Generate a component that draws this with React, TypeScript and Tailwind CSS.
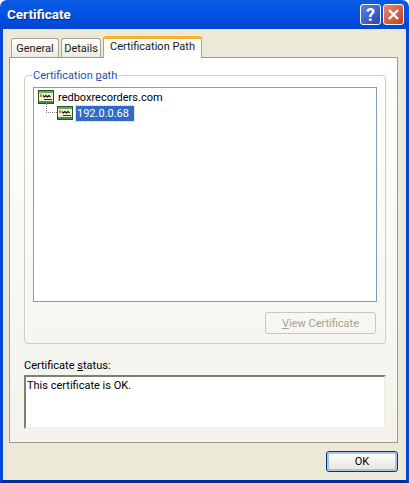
import type { ReactNode } from 'react';

const font = { fontFamily: 'Roboto, "Noto Sans", sans-serif' };

function CertIcon() {
  return (
    <svg width="16" height="14" viewBox="0 0 16 14" className="shrink-0">
      <rect x="0.5" y="0.5" width="15" height="13" fill="#f2f2d8" stroke="#1f5a26" />
      <rect x="1" y="1" width="14" height="2" fill="#6fa860" />
      <rect x="1" y="11" width="14" height="2" fill="#4c8c48" />
      <path d="M5 5.5 l1.5 1.5 l1.5 -1.5 l1.5 1.5 l1.5 -1.5 l1.5 1.5" fill="none" stroke="#111" strokeWidth="1.1" />
      <path d="M6 9.5 H14" stroke="#333" strokeWidth="1" />
      <rect x="2" y="4" width="2" height="3" fill="#b8962e" />
    </svg>
  );
}

function Tab({ children, active }: { children: ReactNode; active?: boolean }) {
  if (active) {
    return (
      <div className="relative z-10 -mb-px flex h-[22px] w-[99px] items-center justify-center rounded-t-[3px] border-x border-[#a5a59a] border-t-[3px] border-t-[#f5b32f] bg-[#fcfcfa] pb-[4px] text-[#1a1a1a]">
        {children}
      </div>
    );
  }
  return (
    <div className="mt-[2px] flex h-[19px] items-center justify-center rounded-t-[3px] border-x border-t border-[#a5a59a] bg-gradient-to-b from-white to-[#ecebe3] px-[5px] pt-px text-[#1a1a1a]">
      {children}
    </div>
  );
}

export default function App() {
  return (
    <div className="flex h-[483px] w-[409px] flex-col bg-white text-[11px] leading-[13px] text-black" style={font}>
      {/* Title bar */}
      <div className="flex h-[29px] shrink-0 items-center justify-between rounded-t-[7px] bg-gradient-to-b from-[#0a5be0] via-[#0451e6] to-[#0345d0] pl-[7px] pr-[5px]">
        <span className="text-[13.5px] font-bold text-white [text-shadow:1px_1px_0_#0a2a80]">Certificate</span>
        <div className="flex gap-[2px]">
          <div className="flex h-[21px] w-[21px] items-center justify-center rounded-[3px] border border-white bg-gradient-to-br from-[#5c80e0] to-[#2347b8] text-[18px] font-bold text-white">?</div>
          <div className="flex h-[21px] w-[21px] items-center justify-center rounded-[3px] border border-white bg-gradient-to-br from-[#e8896a] to-[#c23a1a]">
            <svg width="13" height="13" viewBox="0 0 13 13">
              <path d="M2 2 L11 11 M11 2 L2 11" stroke="#fff" strokeWidth="2.4" />
            </svg>
          </div>
        </div>
      </div>

      {/* Client area inside the blue frame */}
      <div className="flex min-h-0 flex-1 flex-col border-x-[3px] border-b-[3px] border-x-[#0347d8] border-b-[#022f9e] bg-[#ece9d8] pl-[6px] pr-[8px] pt-[7px]">
        <div className="flex items-end gap-[2px] pl-[2px]">
          <div className="w-[48px]">
            <Tab>General</Tab>
          </div>
          <div className="w-[40px]">
            <Tab>Details</Tab>
          </div>
          <Tab active>Certification Path</Tab>
        </div>

        <div className="flex h-[386px] flex-col border border-[#9c9b91] bg-gradient-to-b from-white to-[#f3f2ec] pl-[14px] pr-[11px] pt-[11px]">
          <fieldset className="h-[275px] rounded-[4px] border border-[#d0d0bf] px-[8px]">
            <legend className="-ml-px px-px text-[#1d50b0]">
              Certification <u className="underline-offset-1">p</u>ath
            </legend>
            <div className="mt-[5px] h-[215px] border border-[#7f9db9] bg-white pl-[4px] pt-px">
              <div className="flex h-[16px] items-center gap-[4px]">
                <CertIcon />
                <span>redboxrecorders.com</span>
              </div>
              <div className="relative flex h-[16px] items-center gap-[3px] pl-[19px]">
                <span className="absolute left-[8px] top-[-2px] h-[10px] w-[11px] border-b border-l border-dotted border-[#808080]" />
                <CertIcon />
                <span className="bg-[#316ac5] py-[1px] pl-px pr-[5px] text-white outline-1 outline-dotted outline-[#e0d080]">192.0.0.68</span>
              </div>
            </div>
            <div className="mt-[10px] flex justify-end pr-px">
              <div className="flex h-[22px] w-[111px] items-center justify-center rounded-[3px] border border-[#c9c7ba] text-[#a5a391]">
                <span>
                  <u className="underline-offset-1">V</u>iew Certificate
                </span>
              </div>
            </div>
          </fieldset>

          <div className="mt-[15px]">
            Certificate <u className="underline-offset-1">s</u>tatus:
          </div>
          <div className="mt-[3px] h-[54px] border-2 border-[#f1efe6] border-l-[#807e72] border-t-[#807e72] bg-white pl-[1px] pt-[2px]">
            This certificate is OK.
          </div>
        </div>

        <div className="mt-[8px] flex justify-end">
          <div className="flex h-[21px] w-[72px] items-center justify-center rounded-[3px] border border-[#003c74] bg-gradient-to-b from-white to-[#e6e4d8] shadow-[inset_0_0_0_2px_#a9c4ec]">
            OK
          </div>
        </div>
      </div>
    </div>
  );
}
